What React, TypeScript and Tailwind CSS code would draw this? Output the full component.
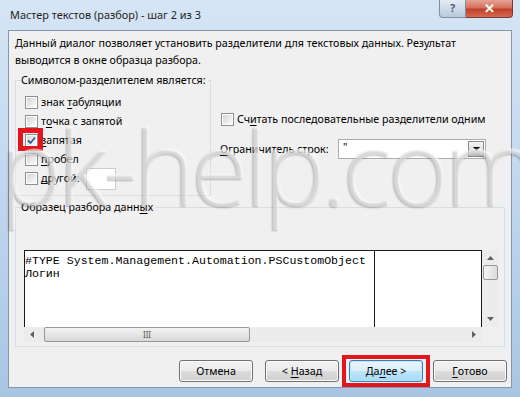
import React from "react";

const Box = ({ checked = false }: { checked?: boolean }) => (
  <span className="flex h-[13px] w-[13px] shrink-0 items-center justify-center border border-[#8e8f8f] bg-white p-[1px]">
    <span className="flex h-full w-full items-center justify-center bg-gradient-to-br from-[#d6d6d6] to-[#fbfbfb]">
      {checked && (
        <svg width="9" height="9" viewBox="0 0 9 9">
          <path d="M1 4.5 L3.5 7 L8 1.5" fill="none" stroke="#3a5a9c" strokeWidth="1.8" />
        </svg>
      )}
    </span>
  </span>
);

const U = ({ children }: { children: React.ReactNode }) => <span className="underline underline-offset-2">{children}</span>;

const Row = ({ children, checked = false, mark = false }: { children: React.ReactNode; checked?: boolean; mark?: boolean }) => (
  <div className="flex h-[19px] items-center gap-[3px]">
    <span className="relative">
      {mark && <span className="absolute -left-[7px] -top-[6px] h-[23px] w-[25px] border-[5px] border-[#e3151f]" />}
      <Box checked={checked} />
    </span>
    <span className="whitespace-nowrap">{children}</span>
  </div>
);

const Btn = ({ children, primary = false }: { children: React.ReactNode; primary?: boolean }) => (
  <button
    className={
      "flex h-[22px] w-[74px] items-center justify-center whitespace-nowrap rounded-[3px] border text-[10.7px] " +
      (primary
        ? "border-[#3c7fb1] bg-[linear-gradient(#eaf6fd_0%,#d9f0fc_50%,#bee6fd_50%,#a7d9f5_100%)] shadow-[inset_0_0_0_1px_#b8e8fa]"
        : "border-[#707070] bg-[linear-gradient(#f2f2f2_0%,#ebebeb_50%,#dddddd_50%,#cfcfcf_100%)] shadow-[inset_0_0_0_1px_#fcfcfc]")
    }
  >
    {children}
  </button>
);

const Tri = ({ dir }: { dir: "up" | "down" | "left" | "right" }) => {
  const d = {
    up: "M0 4 L3.5 0 L7 4 Z",
    down: "M0 0 L3.5 4 L7 0 Z",
    left: "M4 0 L0 3.5 L4 7 Z",
    right: "M0 0 L4 3.5 L0 7 Z",
  }[dir];
  const w = dir === "up" || dir === "down" ? 7 : 4;
  const h = dir === "up" || dir === "down" ? 4 : 7;
  return (
    <svg width={w} height={h} viewBox={`0 0 ${w} ${h}`}>
      <path d={d} fill="#606060" />
    </svg>
  );
};

export default function App() {
  return (
    <div className="relative h-[397px] w-[520px] overflow-hidden bg-gradient-to-b from-[#d6e5f5] via-[#c0d6ee] to-[#a9c5e4] font-['Noto_Sans',sans-serif] text-[10.7px] text-black">
      {/* title bar */}
      <div className="flex h-[30px] items-start justify-between pl-[10px] pr-[7px]">
        <span className="mt-[7px] text-[10.9px] text-[#1e1e1e]">Мастер текстов (разбор) - шаг 2 из 3</span>
        <div className="flex">
          <div className="flex h-[18px] w-[27px] items-center justify-center rounded-bl-[4px] border border-t-0 border-[#7d8fa5] bg-gradient-to-b from-[#e4ecf5] to-[#b9cadd] text-[11px] font-bold text-[#4d5c70]">
            ?
          </div>
          <div className="flex h-[18px] w-[47px] items-center justify-center rounded-br-[4px] border border-l-0 border-t-0 border-[#7a3a34] bg-[linear-gradient(#e6a395_0%,#d5705c_45%,#c0402a_55%,#d46a50_100%)] text-[13px] font-bold text-white">
            ✕
          </div>
        </div>
      </div>

      {/* client area */}
      <div className="mx-[8px] flex h-[358px] flex-col border border-[#8397ad] bg-[#f0f0f0] px-[6px]">
        <p className="pt-[4px] leading-[17px]">
          Данный диалог позволяет установить разделители для текстовых данных. Результат
          <br />
          выводится в окне образца разбора.
        </p>

        <div className="mt-[3px] flex">
          <fieldset className="h-[124px] w-[196px] min-w-0 shrink-0 border border-[#d5dfe5] pl-[9px] pt-[4px]">
            <legend className="-ml-[4px] whitespace-nowrap pr-[2px] leading-[17px]">Символом-разделителем является:</legend>
            <Row>
              знак <U>т</U>абуляции
            </Row>
            <Row>
              т<U>о</U>чка с запятой
            </Row>
            <Row checked mark>
              <U>з</U>апятая
            </Row>
            <Row>
              <U>п</U>робел
            </Row>
            <Row>
              <U>д</U>ругой:
              <span className="ml-[6px] inline-block h-[22px] w-[30px] border border-[#c5cdd8] bg-white align-middle" />
            </Row>
          </fieldset>

          <div className="ml-[10px] flex flex-col pt-[38px]">
            <Row>
              Сч<U>и</U>тать последовательные разделители одним
            </Row>
            <div className="mt-[10px] flex h-[20px] items-center">
              <span className="-ml-[1px] w-[118px] whitespace-nowrap">
                <U>О</U>граничитель строк:
              </span>
              <div className="flex h-[20px] w-[148px] items-stretch border border-[#abadb3] bg-white">
                <span className="flex-1 pl-[4px] leading-[14px]">"</span>
                <span className="m-[1px] flex w-[16px] items-center justify-center border border-[#8b8b8b] bg-gradient-to-b from-[#f4f4f4] to-[#d4d4d4]">
                  <svg width="7" height="4" viewBox="0 0 7 4">
                    <path d="M0 0 L3.5 4 L7 0 Z" fill="#000" />
                  </svg>
                </span>
              </div>
            </div>
          </div>
        </div>

        <fieldset className="mt-[3px] h-[148px] min-w-0 border border-[#d5dfe5] pl-[8px] pt-[34px]">
          <legend className="-ml-[3px] whitespace-nowrap pr-[2px] leading-[17px]">
            Образец разбора данн<U>ы</U>х
          </legend>
          <div className="flex h-[77px]">
            <div className="flex w-[458px] border border-b-0 border-[#1a1a1a] bg-white font-['Liberation_Mono',monospace] text-[11.6px] leading-[13px]">
              <div className="w-[350px] whitespace-nowrap border-r border-[#1a1a1a] pt-[3px]">
                <div>#TYPE System.Management.Automation.PSCustomObject</div>
                <div>Логин</div>
              </div>
              <div className="flex-1" />
            </div>
            <div className="flex w-[16px] flex-col items-center bg-[#ececec]">
              <span className="mt-[6px]">
                <Tri dir="up" />
              </span>
              <span className="mt-[5px] h-[15px] w-[15px] rounded-[2px] border border-[#979797] bg-gradient-to-r from-[#f3f3f3] to-[#dcdcdc]" />
              <span className="mt-auto mb-[6px]">
                <Tri dir="down" />
              </span>
            </div>
          </div>
          <div className="flex h-[15px] w-[458px] items-center bg-[#ececec]">
            <span className="ml-[6px]">
              <Tri dir="left" />
            </span>
            <span className="ml-[10px] flex h-[15px] w-[206px] items-center justify-center rounded-[2px] border border-[#979797] bg-gradient-to-b from-[#f3f3f3] to-[#d8d8d8] text-[8px] leading-none text-[#555]">
              III
            </span>
            <span className="ml-auto mr-[6px]">
              <Tri dir="right" />
            </span>
          </div>
        </fieldset>

        <div className="-mr-[2px] mt-[13px] flex justify-end gap-[10px]">
          <span className="mr-[2px]">
            <Btn>Отмена</Btn>
          </span>
          <Btn>
            &lt;&nbsp;<U>Н</U>азад
          </Btn>
          <span className="relative">
            <span className="absolute -left-[7px] -top-[5px] h-[32px] w-[88px] border-[4px] border-[#e3151f]" />
            <Btn primary>
              Да<U>л</U>ее&nbsp;&gt;
            </Btn>
          </span>
          <Btn>
            <U>Г</U>отово
          </Btn>
        </div>
      </div>

      {/* watermark */}
      <div className="pointer-events-none absolute left-[0px] top-[114px] whitespace-nowrap font-['Open_Sans',sans-serif] text-[104px] font-light leading-none tracking-[-4px] text-[rgba(255,255,255,0.4)] [text-shadow:-1px_1px_2px_rgba(70,70,70,0.35),1px_-1px_0_rgba(255,255,255,0.5)]">
        pk-help.com
      </div>
    </div>
  );
}
